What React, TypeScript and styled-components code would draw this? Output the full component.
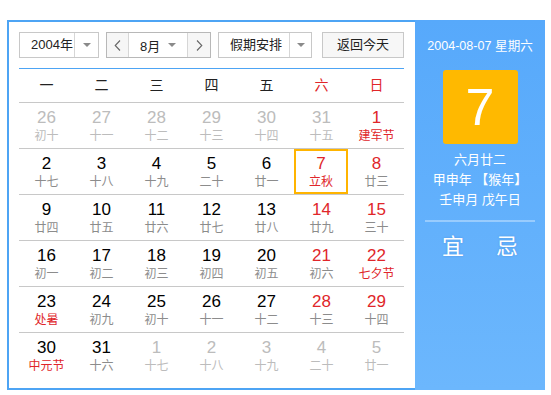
import React from "react";
import styled, { createGlobalStyle } from "styled-components";

const GlobalStyle = createGlobalStyle`
  html, body {
    margin: 0;
    padding: 0;
    background: #fff;
    font-family: "Liberation Sans", "Noto Sans CJK SC", sans-serif;
  }
`;

const Page = styled.div`
  padding: 20px 0 0 7px;
`;

const Frame = styled.div`
  display: flex;
  width: 538px;
  height: 370px;
`;

const Left = styled.div`
  width: 385px;
  border: 2px solid #4da4f4;
  border-right: none;
  padding: 10px 11px 0 10px;
  box-sizing: content-box;
  height: 356px;
  display: flex;
  flex-direction: column;
`;

const Toolbar = styled.div`
  display: flex;
  height: 26px;
  padding-bottom: 10px;
  border-bottom: 1px solid #4da4f4;
`;

const Select = styled.div<{ $w: number; $text: number; $gap?: number }>`
  display: flex;
  width: ${(p) => p.$w}px;
  height: 26px;
  box-sizing: border-box;
  border: 1px solid #c8c8c8;
  margin-right: ${(p) => p.$gap ?? 7}px;
  font-size: 13px;
  color: #222;
  background: #fff;
  .label {
    width: ${(p) => p.$text}px;
    padding-left: 11px;
    box-sizing: border-box;
    line-height: 24px;
    border-right: 1px solid #d6d6d6;
  }
  .arrow {
    flex: 1;
    display: flex;
    align-items: center;
    justify-content: center;
  }
`;

const Caret = styled.span`
  width: 0;
  height: 0;
  border-left: 4px solid transparent;
  border-right: 4px solid transparent;
  border-top: 4px solid #8a8a8a;
`;

const MonthGroup = styled.div`
  display: flex;
  width: 105px;
  height: 26px;
  box-sizing: border-box;
  border: 1px solid #b8b8b8;
  margin-right: 7px;
  font-size: 13px;
  color: #222;
`;

const NavBtn = styled.div<{ $side: "l" | "r" }>`
  width: ${(p) => (p.$side === "l" ? 21 : 22)}px;
  display: flex;
  align-items: center;
  justify-content: center;
  background: #f6f6f6;
  ${(p) => (p.$side === "l" ? "border-right" : "border-left")}: 1px solid #d6d6d6;
`;

const MonthValue = styled.div`
  flex: 1;
  display: flex;
  align-items: center;
  justify-content: space-between;
  padding: 0 11px 0 11px;
  background: #fff;
`;

const TodayBtn = styled.div`
  width: 82px;
  height: 26px;
  margin-left: 3px;
  box-sizing: border-box;
  border: 1px solid #c8c8c8;
  background: #f7f7f7;
  font-size: 13px;
  color: #222;
  text-align: center;
  line-height: 24px;
`;

const WeekHead = styled.div`
  display: grid;
  grid-template-columns: repeat(7, 55px);
  height: 33px;
  border-bottom: 1px solid #c8c8c8;
`;

const WeekCell = styled.div<{ $red?: boolean }>`
  text-align: center;
  line-height: 33px;
  font-size: 14px;
  color: ${(p) => (p.$red ? "#e0262a" : "#222")};
`;

const Row = styled.div<{ $last?: boolean }>`
  display: grid;
  grid-template-columns: repeat(7, 55px);
  height: 45px;
  border-bottom: ${(p) => (p.$last ? "none" : "1px solid #c8c8c8")};
`;

const Cell = styled.div<{ $sel?: boolean }>`
  text-align: center;
  padding-top: 5px;
  box-sizing: border-box;
  ${(p) =>
    p.$sel &&
    `
    width: 54px;
    border: 2px solid #ffb400;
    padding-top: 3px;
  `}
`;

const Num = styled.div<{ $tone: string }>`
  font-size: 17px;
  line-height: 19px;
  color: ${(p) => p.$tone};
`;

const Lunar = styled.div<{ $tone: string }>`
  font-size: 12px;
  line-height: 19px;
  color: ${(p) => p.$tone};
`;

const Side = styled.div`
  width: 130px;
  height: 370px;
  background: linear-gradient(#57a9fb, #6cb7fd);
  color: #fff;
  display: flex;
  flex-direction: column;
  align-items: center;
`;

const DateLine = styled.div`
  margin-top: 17px;
  line-height: 18px;
  font-size: 12.6px;
`;

const BigDay = styled.div`
  margin-top: 15px;
  width: 75px;
  height: 74px;
  border-radius: 3px;
  background: #ffb900;
  text-align: center;
  line-height: 74px;
  font-size: 52px;
  color: #fff;
`;

const LunarInfo = styled.div`
  margin-top: 6px;
  font-size: 13px;
  line-height: 20px;
  text-align: center;
`;

const Divider = styled.div`
  margin-top: 10px;
  width: 110px;
  height: 2px;
  background: rgba(255, 255, 255, 0.35);
`;

const YiJi = styled.div`
  margin-top: 10px;
  display: flex;
  gap: 32px;
  font-size: 22px;
  line-height: 30px;
  text-shadow: 0 0 2px rgba(0, 60, 140, 0.25);
`;

const Chevron = ({ dir }: { dir: "l" | "r" }) => (
  <svg width="7" height="11" viewBox="0 0 7 11">
    <polyline
      points={dir === "l" ? "6,0.5 1.2,5.5 6,10.5" : "1,0.5 5.8,5.5 1,10.5"}
      fill="none"
      stroke="#666"
      strokeWidth="1.1"
    />
  </svg>
);

type Day = { n: number; l: string; other?: boolean; fest?: boolean; sel?: boolean };

const weeks: Day[][] = [
  [
    { n: 26, l: "初十", other: true },
    { n: 27, l: "十一", other: true },
    { n: 28, l: "十二", other: true },
    { n: 29, l: "十三", other: true },
    { n: 30, l: "十四", other: true },
    { n: 31, l: "十五", other: true },
    { n: 1, l: "建军节", fest: true },
  ],
  [
    { n: 2, l: "十七" },
    { n: 3, l: "十八" },
    { n: 4, l: "十九" },
    { n: 5, l: "二十" },
    { n: 6, l: "廿一" },
    { n: 7, l: "立秋", fest: true, sel: true },
    { n: 8, l: "廿三" },
  ],
  [
    { n: 9, l: "廿四" },
    { n: 10, l: "廿五" },
    { n: 11, l: "廿六" },
    { n: 12, l: "廿七" },
    { n: 13, l: "廿八" },
    { n: 14, l: "廿九" },
    { n: 15, l: "三十" },
  ],
  [
    { n: 16, l: "初一" },
    { n: 17, l: "初二" },
    { n: 18, l: "初三" },
    { n: 19, l: "初四" },
    { n: 20, l: "初五" },
    { n: 21, l: "初六" },
    { n: 22, l: "七夕节", fest: true },
  ],
  [
    { n: 23, l: "处暑", fest: true },
    { n: 24, l: "初九" },
    { n: 25, l: "初十" },
    { n: 26, l: "十一" },
    { n: 27, l: "十二" },
    { n: 28, l: "十三" },
    { n: 29, l: "十四" },
  ],
  [
    { n: 30, l: "中元节", fest: true },
    { n: 31, l: "十六" },
    { n: 1, l: "十七", other: true },
    { n: 2, l: "十八", other: true },
    { n: 3, l: "十九", other: true },
    { n: 4, l: "二十", other: true },
    { n: 5, l: "廿一", other: true },
  ],
];

const RED = "#e0262a";

const App: React.FC = () => {
  return (
    <Page>
      <GlobalStyle />
      <Frame>
        <Left>
          <Toolbar>
            <Select $w={80} $text={55}>
              <span className="label">2004年</span>
              <span className="arrow">
                <Caret />
              </span>
            </Select>
            <MonthGroup>
              <NavBtn $side="l">
                <Chevron dir="l" />
              </NavBtn>
              <MonthValue>
                <span>8月</span>
                <Caret />
              </MonthValue>
              <NavBtn $side="r">
                <Chevron dir="r" />
              </NavBtn>
            </MonthGroup>
            <Select $w={94} $text={71}>
              <span className="label">假期安排</span>
              <span className="arrow">
                <Caret />
              </span>
            </Select>
            <TodayBtn>返回今天</TodayBtn>
          </Toolbar>
          <WeekHead>
            {["一", "二", "三", "四", "五", "六", "日"].map((w, i) => (
              <WeekCell key={w} $red={i > 4}>
                {w}
              </WeekCell>
            ))}
          </WeekHead>
          {weeks.map((week, r) => (
            <Row key={r} $last={r === weeks.length - 1}>
              {week.map((d, i) => {
                const weekend = i > 4;
                const numTone = d.other ? "#bcbcbc" : weekend || d.sel ? RED : "#000";
                const lunarTone = d.other ? "#bcbcbc" : d.fest ? RED : "#8c8c8c";
                return (
                  <Cell key={i} $sel={d.sel}>
                    <Num $tone={numTone}>{d.n}</Num>
                    <Lunar $tone={lunarTone}>{d.l}</Lunar>
                  </Cell>
                );
              })}
            </Row>
          ))}
        </Left>
        <Side>
          <DateLine>2004-08-07 星期六</DateLine>
          <BigDay>7</BigDay>
          <LunarInfo>
            六月廿二
            <br />
            甲申年 【猴年】
            <br />
            壬申月 戊午日
          </LunarInfo>
          <Divider />
          <YiJi>
            <span>宜</span>
            <span>忌</span>
          </YiJi>
        </Side>
      </Frame>
    </Page>
  );
};

export default App;
